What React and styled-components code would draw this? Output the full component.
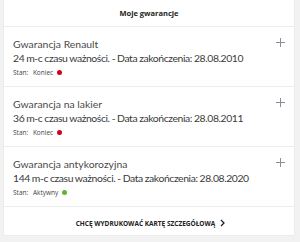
import React from 'react';
import styled, { createGlobalStyle } from 'styled-components';

const Global = createGlobalStyle`
    body {
        margin: 0;
        background: #f2f2f2;
        font-family: Lato, "Open Sans", sans-serif;
        color: #333;
    }
`
const Card = styled.div`
    width: 292px;
    margin: 0 0 0 3px;
    background: #fff;
    border: 1px solid #ececec;
    border-top: none;
    box-sizing: border-box;
    height: 236px;
`
const Header = styled.div`
    height: 27px;
    display: flex;
    align-items: center;
    justify-content: center;
    font-family: "Open Sans", sans-serif;
    font-size: 7.5px;
    font-weight: 700;
    color: #222;
    border-bottom: 1px solid #ececec;
    box-sizing: border-box;
`
const Item = styled.div`
    position: relative;
    height: 60px;
    padding: 10px 0 0 9px;
    box-sizing: border-box;
    border-bottom: 1px solid #ececec;
`
const Title = styled.div`
    font-size: 10.4px;
    line-height: 14px;
    color: #4a4a4a;
`
const Period = styled.div`
    font-size: 10.4px;
    line-height: 14px;
    letter-spacing: -0.4px;
    word-spacing: -0.3px;
    color: #3a3a3a;
`
const Status = styled.div`
    display: flex;
    align-items: center;
    gap: 3px;
    font-family: "Open Sans", sans-serif;
    font-size: 6.5px;
    line-height: 15px;
    color: #444;
`
const Dot = styled.span`
    width: 5px;
    height: 5px;
    border-radius: 50%;
    background: ${p => p.$active ? '#5bb72e' : '#d0021b'};
    margin-left: 1px;
`
const Plus = styled.svg`
    position: absolute;
    right: 9px;
    top: 11px;
`
const Footer = styled.div`
    height: 32px;
    display: flex;
    align-items: center;
    justify-content: center;
    gap: 5px;
    font-family: "Open Sans", sans-serif;
    font-size: 6.5px;
    font-weight: 700;
    color: #222;
    padding-left: 3px;
`

const warranties = [
    { name: 'Gwarancja Renault', months: 24, end: '28.08.2010', state: 'Koniec' },
    { name: 'Gwarancja na lakier', months: 36, end: '28.08.2011', state: 'Koniec' },
    { name: 'Gwarancja antykorozyjna', months: 144, end: '28.08.2020', state: 'Aktywny', active: true },
]

export default function App() {
    return (
        <>
            <Global />
            <Card>
                <Header>Moje gwarancje</Header>
                {warranties.map(w => (
                    <Item key={w.name}>
                        <Title>{w.name}</Title>
                        <Period>{w.months} m-c czasu ważności. - Data zakończenia: {w.end}</Period>
                        <Status>Stan: <span>&nbsp;{w.state}</span><Dot $active={w.active} /></Status>
                        <Plus width="9" height="9" viewBox="0 0 9 9">
                            <path d="M4.5 0V9M0 4.5H9" stroke="#8a8c99" strokeWidth="1" />
                        </Plus>
                    </Item>
                ))}
                <Footer>
                    CHCĘ WYDRUKOWAĆ KARTĘ SZCZEGÓŁOWĄ
                    <svg width="5" height="8" viewBox="0 0 5 8">
                        <path d="M1 1L4 4L1 7" stroke="#222" strokeWidth="1.3" fill="none" />
                    </svg>
                </Footer>
            </Card>
        </>
    );
}
